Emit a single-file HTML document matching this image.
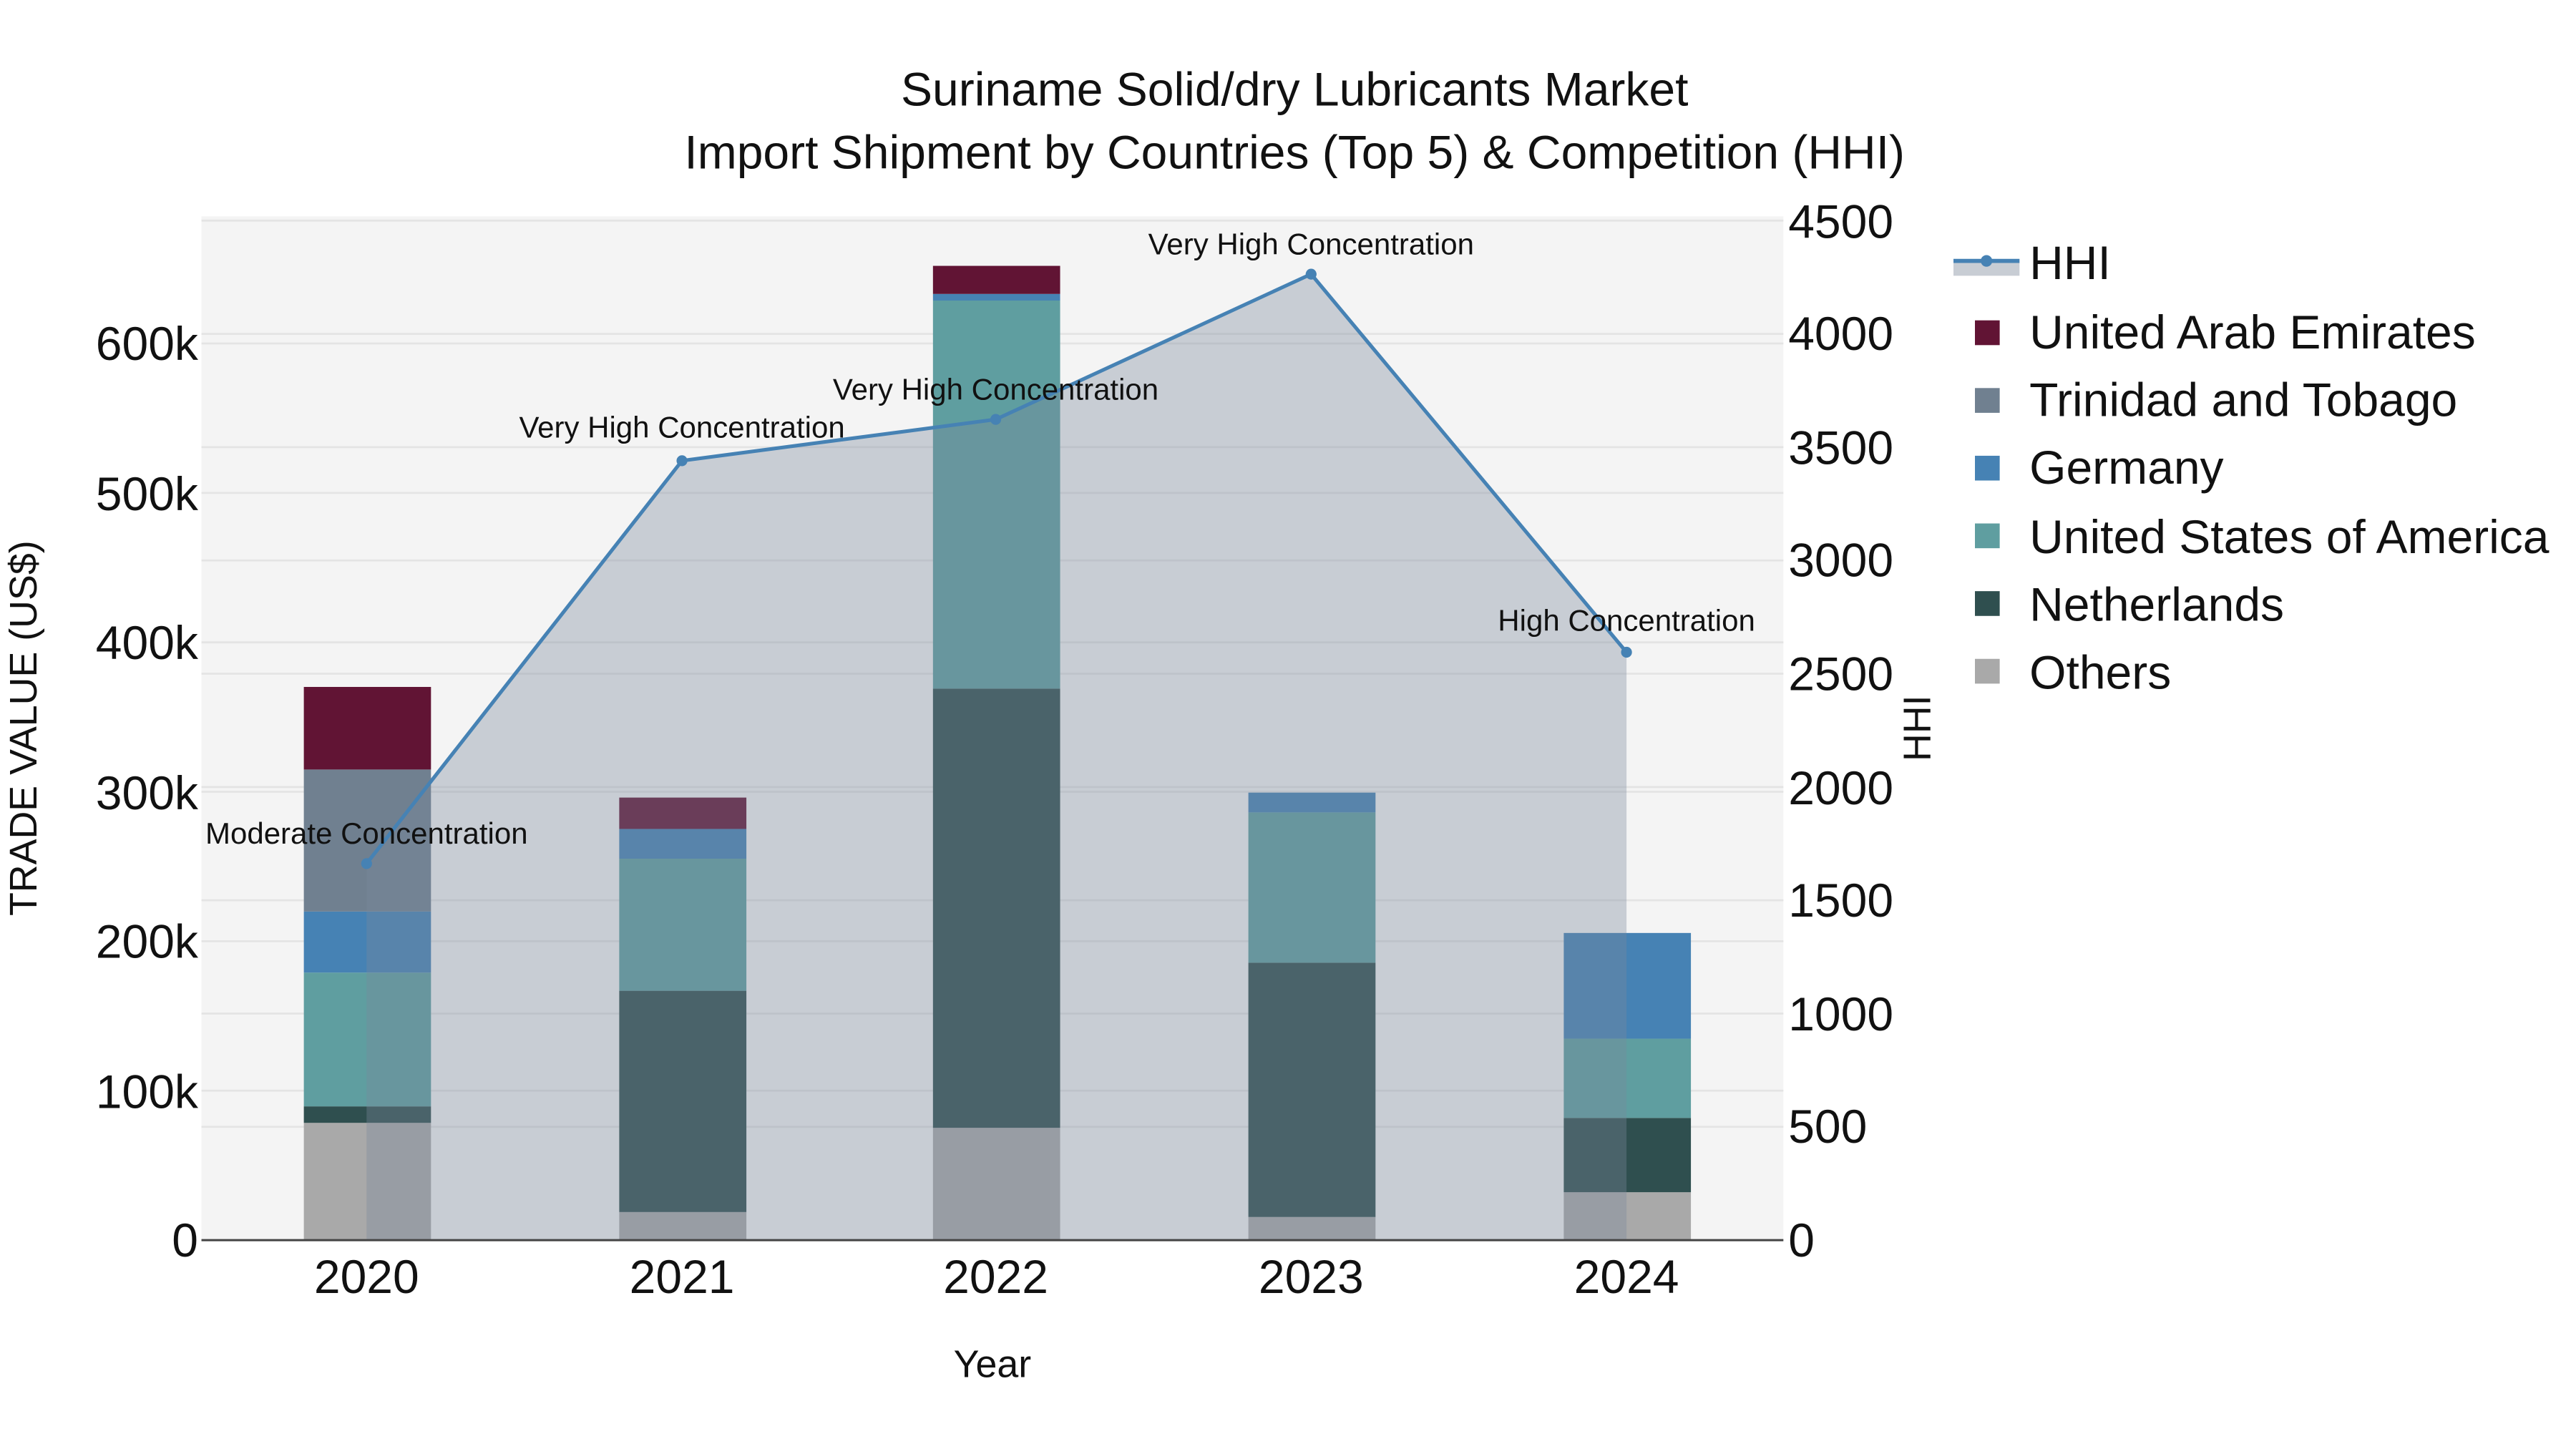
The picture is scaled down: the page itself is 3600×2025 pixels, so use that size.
<!DOCTYPE html>
<html><head><meta charset="utf-8"><style>html,body{margin:0;padding:0;background:#fff}svg{display:block}text{font-family:"Liberation Sans",sans-serif}</style></head><body>
<svg width="3600" height="2025" viewBox="0 0 1560 877.5" xmlns="http://www.w3.org/2000/svg">
<rect width="1560" height="877.5" fill="#fff"/>
<rect x="122" y="131" width="958" height="620" fill="#f4f4f4"/>
<g stroke="#e4e4e4" stroke-width="1.2">
<line x1="122" x2="1080" y1="660.5" y2="660.5"/><line x1="122" x2="1080" y1="570" y2="570"/><line x1="122" x2="1080" y1="479.5" y2="479.5"/><line x1="122" x2="1080" y1="389" y2="389"/><line x1="122" x2="1080" y1="298.5" y2="298.5"/><line x1="122" x2="1080" y1="208" y2="208"/>
<line x1="122" x2="1080" y1="682.4" y2="682.4"/><line x1="122" x2="1080" y1="613.8" y2="613.8"/><line x1="122" x2="1080" y1="545.2" y2="545.2"/><line x1="122" x2="1080" y1="476.6" y2="476.6"/><line x1="122" x2="1080" y1="408" y2="408"/><line x1="122" x2="1080" y1="339.4" y2="339.4"/><line x1="122" x2="1080" y1="270.8" y2="270.8"/><line x1="122" x2="1080" y1="202.2" y2="202.2"/><line x1="122" x2="1080" y1="133.6" y2="133.6"/>
</g>
<g>
<rect x="184" y="680" width="77" height="71" fill="#a9a9a9"/><rect x="184" y="670" width="77" height="10" fill="#2f4f4f"/><rect x="184" y="589" width="77" height="81" fill="#5f9ea0"/><rect x="184" y="552" width="77" height="37" fill="#4682b4"/><rect x="184" y="466" width="77" height="86" fill="#708090"/><rect x="184" y="416" width="77" height="50" fill="#611434"/>
<rect x="375" y="734" width="77" height="17" fill="#a9a9a9"/><rect x="375" y="600" width="77" height="134" fill="#2f4f4f"/><rect x="375" y="520" width="77" height="80" fill="#5f9ea0"/><rect x="375" y="502" width="77" height="18" fill="#4682b4"/><rect x="375" y="483" width="77" height="19" fill="#611434"/>
<rect x="565" y="683" width="77" height="68" fill="#a9a9a9"/><rect x="565" y="417" width="77" height="266" fill="#2f4f4f"/><rect x="565" y="182" width="77" height="235" fill="#5f9ea0"/><rect x="565" y="178" width="77" height="4" fill="#4682b4"/><rect x="565" y="161" width="77" height="17" fill="#611434"/>
<rect x="756" y="737" width="77" height="14" fill="#a9a9a9"/><rect x="756" y="583" width="77" height="154" fill="#2f4f4f"/><rect x="756" y="492" width="77" height="91" fill="#5f9ea0"/><rect x="756" y="480" width="77" height="12" fill="#4682b4"/>
<rect x="947" y="722" width="77" height="29" fill="#a9a9a9"/><rect x="947" y="677" width="77" height="45" fill="#2f4f4f"/><rect x="947" y="629" width="77" height="48" fill="#5f9ea0"/><rect x="947" y="565" width="77" height="64" fill="#4682b4"/>
</g>
<polygon points="222,751 222,523 413,279 603,254 794,166 985,395 985,751" fill="rgba(122,136,155,0.36)"/>
<polyline points="222,523 413,279 603,254 794,166 985,395" fill="none" stroke="#4682b4" stroke-width="2.2"/>
<g fill="#4682b4"><circle cx="222" cy="523" r="3.3"/><circle cx="413" cy="279" r="3.3"/><circle cx="603" cy="254" r="3.3"/><circle cx="794" cy="166" r="3.3"/><circle cx="985" cy="395" r="3.3"/></g>
<line x1="122" x2="1080" y1="751" y2="751" stroke="#444" stroke-width="1.3"/>
<g font-size="18.2" fill="#111" text-anchor="middle">
<text x="222" y="511">Moderate Concentration</text><text x="413" y="265">Very High Concentration</text><text x="603" y="242">Very High Concentration</text><text x="794" y="154">Very High Concentration</text><text x="985" y="382">High Concentration</text>
</g>
<g font-size="28.6" fill="#111" text-anchor="end">
<text x="120" y="761">0</text><text x="120" y="671">100k</text><text x="120" y="580">200k</text><text x="120" y="490">300k</text><text x="120" y="399">400k</text><text x="120" y="309">500k</text><text x="120" y="218">600k</text>
</g>
<g font-size="28.6" fill="#111">
<text x="1083" y="761">0</text><text x="1083" y="692">500</text><text x="1083" y="624">1000</text><text x="1083" y="555">1500</text><text x="1083" y="487">2000</text><text x="1083" y="418">2500</text><text x="1083" y="349">3000</text><text x="1083" y="281">3500</text><text x="1083" y="212">4000</text><text x="1083" y="144">4500</text>
</g>
<g font-size="28.6" fill="#111" text-anchor="middle">
<text x="222" y="783">2020</text><text x="413" y="783">2021</text><text x="603" y="783">2022</text><text x="794" y="783">2023</text><text x="985" y="783">2024</text>
</g>
<text x="601" y="834" font-size="23.3" fill="#111" text-anchor="middle">Year</text>
<text transform="translate(22,441) rotate(-90)" font-size="23.3" fill="#111" text-anchor="middle">TRADE VALUE (US$)</text>
<text transform="translate(1169,441) rotate(-90)" font-size="23.3" fill="#111" text-anchor="middle">HHI</text>
<g font-size="28.6" fill="#111" text-anchor="middle">
<text x="784" y="64">Suriname Solid/dry Lubricants Market</text>
<text x="784" y="102">Import Shipment by Countries (Top 5) &amp; Competition (HHI)</text>
</g>
<rect x="1183" y="159" width="40" height="8" fill="#c8cdd4"/>
<line x1="1183" x2="1223" y1="158" y2="158" stroke="#4682b4" stroke-width="2.5"/><circle cx="1203" cy="158" r="3.5" fill="#4682b4"/>
<g>
<rect x="1196" y="194" width="15" height="15" fill="#611434"/><rect x="1196" y="235" width="15" height="15" fill="#708090"/><rect x="1196" y="276" width="15" height="15" fill="#4682b4"/><rect x="1196" y="317" width="15" height="15" fill="#5f9ea0"/><rect x="1196" y="358" width="15" height="15" fill="#2f4f4f"/><rect x="1196" y="399" width="15" height="15" fill="#a9a9a9"/>
</g>
<g font-size="28.6" fill="#111">
<text x="1229" y="169">HHI</text><text x="1229" y="211">United Arab Emirates</text><text x="1229" y="252">Trinidad and Tobago</text><text x="1229" y="293">Germany</text><text x="1229" y="335">United States of America</text><text x="1229" y="376">Netherlands</text><text x="1229" y="417">Others</text>
</g>
</svg>
</body></html>
